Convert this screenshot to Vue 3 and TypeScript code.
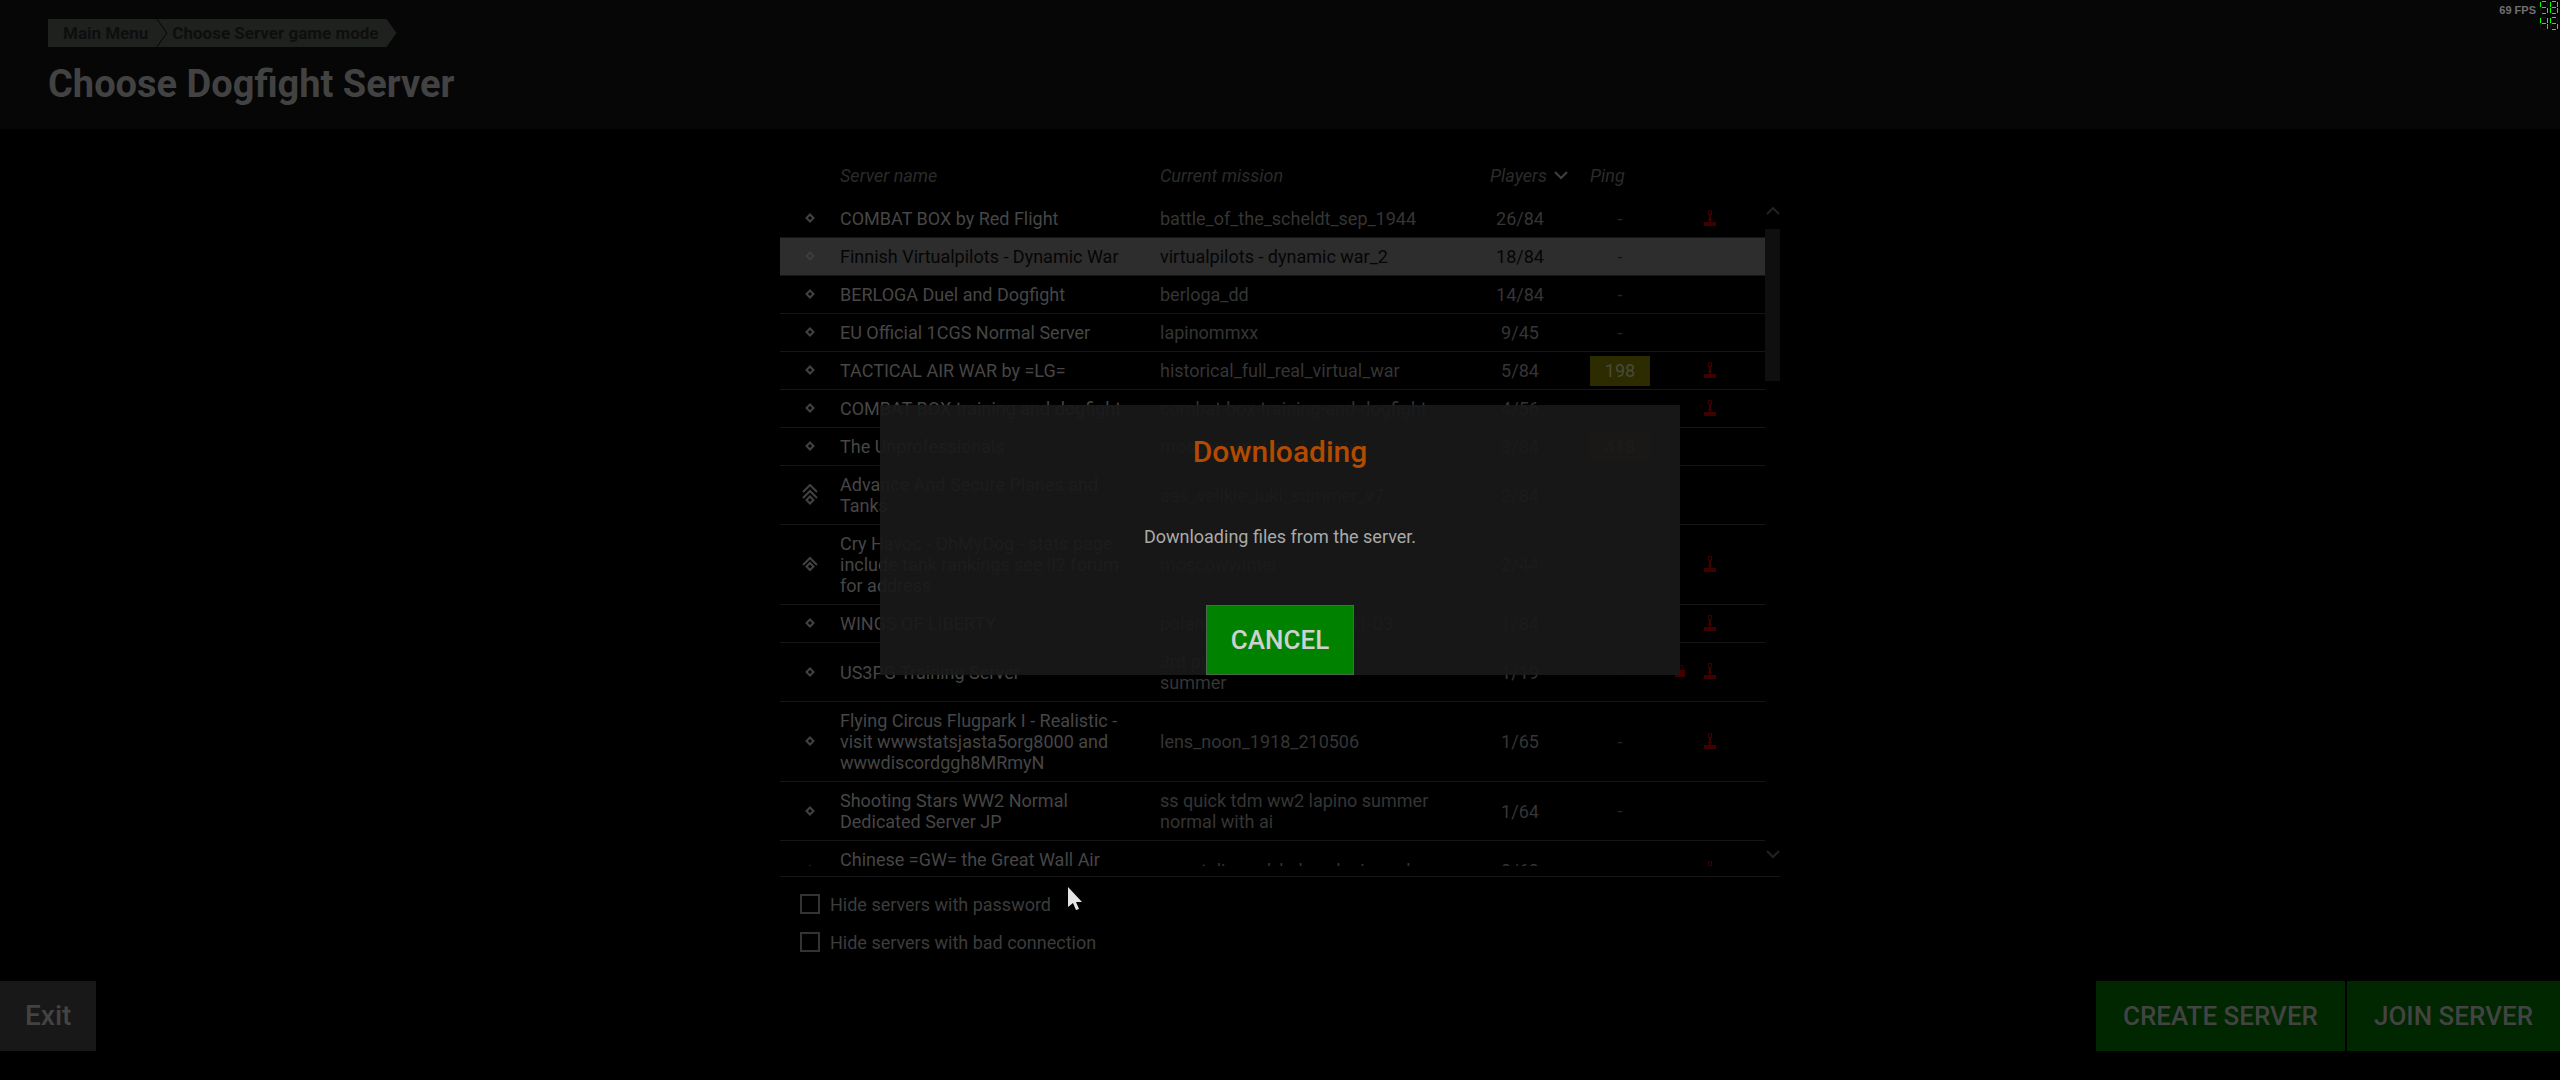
<script setup lang="ts">
import { ref } from 'vue'

interface Server {
  name: string
  mission: string
  players: string
  ping?: number
  rank: number
  locked?: boolean
  expert?: boolean
}

const servers: Server[] = [
  { name: 'COMBAT BOX by Red Flight', mission: 'battle_of_the_scheldt_sep_1944', players: '26/84', rank: 0, expert: true },
  { name: 'Finnish Virtualpilots - Dynamic War', mission: 'virtualpilots - dynamic war_2', players: '18/84', rank: 0 },
  { name: 'BERLOGA Duel and Dogfight', mission: 'berloga_dd', players: '14/84', rank: 0 },
  { name: 'EU Official 1CGS Normal Server', mission: 'lapinommxx', players: '9/45', rank: 0 },
  { name: 'TACTICAL AIR WAR by =LG=', mission: 'historical_full_real_virtual_war', players: '5/84', ping: 198, rank: 0, expert: true },
  { name: 'COMBAT BOX training and dogfight', mission: 'combat-box-training-and-dogfight', players: '4/56', rank: 0, expert: true },
  { name: 'The Unprofessionals', mission: 'moscow_matter_1_winter', players: '3/84', ping: 418, rank: 0 },
  { name: 'Advance And Secure Planes and\nTanks', mission: 'aas_velikie_luki_summer_v7', players: '2/84', rank: 2 },
  { name: 'Cry Havoc - OhMyDog - stats page\ninclude tank rankings see il2 forum\nfor address', mission: 'moscowwinter', players: '2/44', rank: 1, expert: true },
  { name: 'WINGS OF LIBERTY', mission: 'poland-summer-wwl-4601-03', players: '1/84', rank: 0, expert: true },
  { name: 'US3PG Training Server', mission: '3rd pg training heavy-\nsummer', players: '1/19', rank: 0, locked: true, expert: true },
  { name: 'Flying Circus Flugpark I - Realistic -\nvisit wwwstatsjasta5org8000 and\nwwwdiscordggh8MRmyN', mission: 'lens_noon_1918_210506', players: '1/65', rank: 0, expert: true },
  { name: 'Shooting Stars WW2 Normal\nDedicated Server JP', mission: 'ss quick tdm ww2 lapino summer\nnormal with ai', players: '1/64', rank: 0 },
  { name: 'Chinese =GW= the Great Wall Air\nForce', mission: 'gw_stalingrad_kuban_leningrad', players: '0/60', rank: 0, expert: true },
]

const selected = ref(1)
const hidePassword = ref(false)
const hideBad = ref(false)

// Outlines of the seven-segment overlay digits, a to g
const segments = ['M2 .5H6', 'M7.5 1V6', 'M7.5 7V12', 'M2 12.5H6', 'M.5 7V12', 'M.5 1V6', 'M2 6.5H6']
const lit: Record<string, string> = { '4': 'bcfg', '5': 'acdfg', '8': 'abcdefg' }
const isLit = (digit: string, index: number) => lit[digit].includes('abcdefg'[index])
</script>

<template>
  <div class="screen">
    <header class="top">
      <nav class="crumbs" aria-label="Breadcrumb">
        <a href="#" class="crumb first">Main Menu</a>
        <a href="#" class="crumb last">Choose Server game mode</a>
      </nav>
      <h1>Choose Dogfight Server</h1>
      <div class="overlay">
        <span class="fps">69 FPS</span>
        <div class="counter">
          <div v-for="line in ['58', '45']" :key="line" class="digits">
            <svg v-for="(d, i) in line" :key="i" viewBox="0 0 8 13" width="8" height="13">
              <path v-for="(s, n) in segments" :key="n" :d="s" :class="isLit(d, n) ? 'on' : 'off'" />
            </svg>
          </div>
        </div>
      </div>
    </header>

    <main class="panel">
      <div class="list">
        <div class="viewport">
          <table>
            <colgroup>
              <col class="c-rank"><col class="c-name"><col class="c-mission"><col class="c-players"><col class="c-ping"><col class="c-flags">
            </colgroup>
            <thead>
              <tr>
                <th></th>
                <th>Server name</th>
                <th>Current mission</th>
                <th class="sorted">Players
                  <svg width="14" height="9" viewBox="0 0 14 9"><path d="M1 1l6 6 6-6" /></svg>
                </th>
                <th>Ping</th>
                <th></th>
              </tr>
            </thead>
            <tbody>
              <tr v-for="(s, i) in servers" :key="s.name" :class="{ selected: i === selected }" @click="selected = i">
                <td class="rank">
                  <svg width="16" height="22" viewBox="0 0 16 22">
                    <path :d="s.rank === 2 ? 'M8 12.500l3.500 3.500-3.500 3.500-3.500-3.500z' : s.rank === 1 ? 'M8 10l3.500 3.500-3.500 3.500-3.500-3.500z' : 'M8 7.500l3.500 3.500-3.500 3.500-3.500-3.500z'" />
                    <path v-if="s.rank === 2" d="M1 14l7-7 7 7M1 8l7-7 7 7" />
                    <path v-if="s.rank === 1" d="M1 12l7-7 7 7" />
                  </svg>
                </td>
                <td class="name">{{ s.name }}</td>
                <td class="mission">{{ s.mission }}</td>
                <td class="players">{{ s.players }}</td>
                <td class="ping"><span :class="{ slow: s.ping === 198, bad: s.ping === 418 }">{{ s.ping ?? '-' }}</span></td>
                <td class="flags">
                  <div>
                    <svg v-if="s.locked" class="lock" width="10" height="12" viewBox="0 0 10 12"><path d="M0 5h10v7H0z" /><path class="line" d="M2 5V3a3 3 0 0 1 6 0v2" /></svg>
                    <svg v-if="s.expert" width="12" height="16" viewBox="0 0 12 16"><path d="M0 12h12v4H0zM5 5h2v8H5zM4 9h4v1H4z" /><path class="line" d="M4.500.5h3v4h-3z" /></svg>
                  </div>
                </td>
              </tr>
            </tbody>
          </table>
        </div>
        <div class="scroll" aria-hidden="true">
          <svg width="14" height="9" viewBox="0 0 14 9"><path d="M1 7l6-6 6 6" /></svg>
          <div class="thumb"></div>
          <svg width="14" height="9" viewBox="0 0 14 9"><path d="M1 1l6 6 6-6" /></svg>
        </div>
      </div>
      <div class="filters">
        <label><input v-model="hidePassword" type="checkbox">Hide servers with password</label>
        <label><input v-model="hideBad" type="checkbox">Hide servers with bad connection</label>
      </div>
    </main>

    <footer class="bottom">
      <button class="exit" type="button">Exit</button>
      <div class="actions">
        <button type="button">CREATE SERVER</button>
        <button type="button">JOIN SERVER</button>
      </div>
    </footer>

    <div class="backdrop">
      <section class="dialog" role="dialog" aria-labelledby="dialog-title">
        <h2 id="dialog-title">Downloading</h2>
        <p>Downloading files from the server.</p>
        <button type="button">CANCEL</button>
      </section>
    </div>

    <svg class="cursor" width="14" height="24" viewBox="0 0 14 24"><path d="M0 0v20l5-4 3 7 3-1-3-7h6z" /></svg>
  </div>
</template>

<style>
body {
  margin: 0;
  background: #000;
}
</style>

<style scoped>
.screen {
  position: relative;
  display: flex;
  flex-direction: column;
  min-height: 100vh;
  background: #000;
  color: #464646;
  font: 18px/21px Roboto, "Liberation Sans", sans-serif;
}
svg {
  display: block;
  fill: none;
}
button {
  font: 500 26px/32px Roboto, "Liberation Sans", sans-serif;
  height: 70px;
  border: 0;
  padding: 0 27px;
}

.top {
  position: relative;
  box-sizing: border-box;
  height: 129px;
  padding: 19px 48px 0;
  background: #060606;
}
.crumbs {
  display: flex;
}
.crumb {
  height: 28px;
  line-height: 29px;
  font-size: 17px;
  font-weight: 700;
  color: #0e0e0e;
  background: #1e211e;
  text-decoration: none;
  white-space: nowrap;
}
.first {
  padding: 0 18px 0 15px;
  clip-path: polygon(0 0, calc(100% - 10px) 0, 100% 50%, calc(100% - 10px) 100%, 0 100%);
}
.last {
  margin-left: -9px;
  padding: 0 18px 0 15px;
  clip-path: polygon(0 0, calc(100% - 10px) 0, 100% 50%, calc(100% - 10px) 100%, 0 100%, 10px 50%);
}
h1 {
  margin: 12px 0 0;
  font-size: 38px;
  line-height: 50px;
  font-weight: 700;
  color: #424242;
}
.overlay {
  position: absolute;
  top: 0;
  right: 2px;
  display: flex;
  gap: 4px;
}
.fps {
  font: 700 11px/20px "Liberation Sans", Arial, sans-serif;
  color: #707070;
}
.counter {
  display: grid;
  gap: 3px;
  padding-top: 1px;
}
.digits {
  display: flex;
  gap: 2px;
}
.on { stroke: #00ff00; }
.off { stroke: #032003; }

.panel {
  width: 1000px;
  margin: 26px auto 0;
}
.list {
  display: flex;
  border-bottom: 1px solid #161616;
  padding-bottom: 10px;
}
.viewport {
  flex: 1;
  height: 711px;
  overflow: hidden;
}
table {
  width: 100%;
  border-collapse: separate;
  border-spacing: 0;
  table-layout: fixed;
}
.c-rank { width: 60px; }
.c-name { width: 320px; }
.c-mission { width: 310px; }
.c-players { width: 120px; }
.c-ping { width: 60px; }
th {
  height: 45px;
  padding: 0;
  box-sizing: border-box;
  text-align: left;
  vertical-align: top;
  line-height: 42px;
  font-weight: 400;
  font-style: italic;
  color: #2b2b2b;
}
.sorted {
  padding-left: 20px;
  white-space: nowrap;
}
.sorted svg {
  display: inline-block;
  margin-left: 3px;
  vertical-align: 2px;
  stroke: #404040;
  stroke-width: 2;
}
td {
  padding: 8px 0;
  border-bottom: 1px solid #161616;
  white-space: pre;
  vertical-align: middle;
}
.mission, .players { color: #353535; }
.players {
  padding-right: 40px;
  padding-left: 20px;
  text-align: center;
}
.rank svg {
  margin: -1px auto 0 22px;
  stroke: #424242;
  stroke-width: 2;
}
.ping {
  padding: 0;
  text-align: center;
  color: #262626;
}
.ping span {
  display: block;
  line-height: 30px;
}
.ping .slow {
  background: #2c2c00;
  color: #4a4a3c;
}
.ping .bad {
  background: #2c0000;
  color: #404040;
}
.flags div {
  display: flex;
  justify-content: flex-end;
  align-items: center;
  gap: 19px;
  margin: -5px 49px -3px 0;
}
.flags svg { fill: #400000; }
.flags .line {
  fill: none;
  stroke: #400000;
}
.selected td {
  background: #2d2d2d;
  color: #050505;
}
.selected .ping { color: #151515; }
.selected .rank svg { stroke: #3c3c3c; }
.scroll {
  display: flex;
  flex-direction: column;
  align-items: center;
  width: 15px;
  padding: 52px 0 7px;
  box-sizing: border-box;
}
.scroll svg {
  stroke: #222;
  stroke-width: 2;
}
.thumb {
  width: 15px;
  height: 152px;
  margin: 13px 0 auto;
  background: #0f0f0f;
}

.filters {
  display: grid;
  gap: 8px;
  padding: 12px 20px 0;
}
label {
  display: flex;
  align-items: center;
  gap: 10px;
  height: 30px;
  color: #3c3c3c;
}
input {
  appearance: none;
  width: 20px;
  height: 20px;
  margin: 0;
  border: 2px solid #333;
  box-sizing: border-box;
}

.bottom {
  display: flex;
  justify-content: space-between;
  margin-top: auto;
  padding-bottom: 29px;
}
.bottom button { color: #434343; }
.bottom .exit {
  padding: 0 25px;
  font-size: 28px;
  background: #181818;
}
.actions {
  display: flex;
  gap: 2px;
}
.actions button { background: #002700; }

.backdrop {
  position: absolute;
  inset: 0;
  display: grid;
  place-items: center;
}
.dialog {
  display: flex;
  flex-direction: column;
  align-items: center;
  width: 800px;
  height: 270px;
  background: rgba(25, 25, 25, 0.92);
}
.dialog h2 {
  margin: 27px 0 0;
  font-size: 30px;
  line-height: 40px;
  font-weight: 500;
  color: #b24a00;
}
.dialog p {
  margin: 54px 0 0;
  color: #aaa;
}
.dialog button {
  margin-top: auto;
  padding: 0 24px;
  background: #008200;
  color: #d0d0d0;
  border: 1px solid #4a6a4a;
}
.cursor {
  position: absolute;
  left: 1068px;
  top: 887px;
  fill: #e4e4e4;
}
</style>
